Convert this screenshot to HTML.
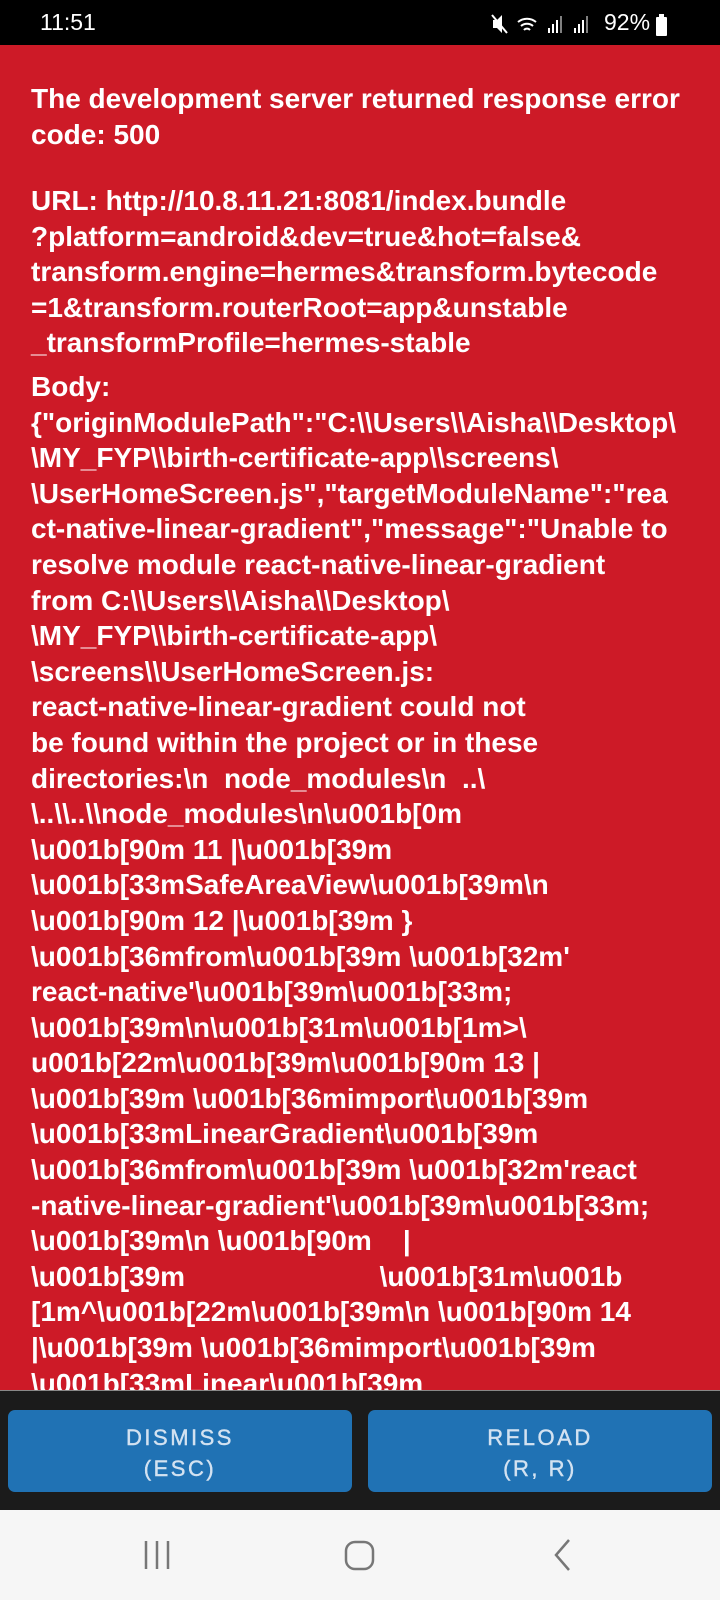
<!DOCTYPE html>
<html style="background:#f6f6f6"><head><meta charset="utf-8"><style>
*{margin:0;padding:0;box-sizing:border-box}
body{width:720px;height:1600px;position:relative;overflow:hidden;background:#f6f6f6;font-family:"Liberation Sans",sans-serif}
#sb{position:absolute;left:0;top:0;width:720px;height:45px;background:#000;color:#fff}
#red{position:absolute;left:0;top:45px;width:720px;height:1345px;background:#cd1a27;overflow:hidden}
.blk{position:absolute;left:31px;color:#fff;font-weight:bold;font-size:28px;line-height:35.6px;letter-spacing:0;white-space:pre}
#bar{position:absolute;left:0;top:1390px;width:720px;height:120px;background:#1b1b1b;border-top:1px solid #888}
.btn{position:absolute;top:19px;height:82px;width:344px;background:#2072b4;border-radius:7px;color:#d3e2f1;font-size:22px;letter-spacing:2.5px;text-align:center;line-height:31px;padding-top:12px;-webkit-text-stroke:0.4px #d3e2f1}
#nav{position:absolute;left:0;top:1510px;width:720px;height:90px;background:#f6f6f6}
</style></head><body>
<div id="sb">
<div style="position:absolute;left:40px;top:9px;font-size:23px">11:51</div>
<svg style="position:absolute;left:490px;top:12px" width="180" height="24" viewBox="0 0 180 24">
<g fill="#fff" stroke="#fff">
<path d="M3 8h4l5-5v18l-5-5H3z" stroke="none"/><path d="M2 3l15 18" stroke-width="2"/>
<path d="M28 10a14 14 0 0 1 18 0M31 14a9 9 0 0 1 12 0M34 18a4 4 0 0 1 6 0" fill="none" stroke-width="2"/>
<rect x="58" y="16" width="2" height="5" stroke="none"/><rect x="62" y="12" width="2" height="9" stroke="none"/><rect x="66" y="8" width="2" height="13" stroke="none"/><rect x="70" y="4" width="2" height="17" stroke="none" opacity=".5"/>
<rect x="84" y="16" width="2" height="5" stroke="none"/><rect x="88" y="12" width="2" height="9" stroke="none"/><rect x="92" y="8" width="2" height="13" stroke="none"/><rect x="96" y="4" width="2" height="17" stroke="none" opacity=".5"/>
</g></svg>
<div style="position:absolute;left:604px;top:9px;font-size:23px;color:#fff">92%</div>
<div style="position:absolute;left:656px;top:17px;width:11px;height:19px;background:#fff;border-radius:1px"></div>
<div style="position:absolute;left:659px;top:14px;width:5px;height:3px;background:#fff"></div>
</div>
<div id="red"></div>
<div class="blk" style="top:81px">The development server returned response error
code: 500</div>
<div class="blk" style="top:183px">URL: http://10.8.11.21:8081/index.bundle
?platform=android&amp;dev=true&amp;hot=false&amp;
transform.engine=hermes&amp;transform.bytecode
=1&amp;transform.routerRoot=app&amp;unstable
_transformProfile=hermes-stable</div>
<div class="blk" style="top:369px;height:1021px;overflow:hidden">Body:
{"originModulePath":"C:\\Users\\Aisha\\Desktop\
\MY_FYP\\birth-certificate-app\\screens\
\UserHomeScreen.js","targetModuleName":"rea
ct-native-linear-gradient","message":"Unable to
resolve module react-native-linear-gradient
from C:\\Users\\Aisha\\Desktop\
\MY_FYP\\birth-certificate-app\
\screens\\UserHomeScreen.js:
react-native-linear-gradient could not
be found within the project or in these
directories:\n  node_modules\n  ..\
\..\\..\\node_modules\n\u001b[0m
\u001b[90m 11 |\u001b[39m
\u001b[33mSafeAreaView\u001b[39m\n
\u001b[90m 12 |\u001b[39m }
\u001b[36mfrom\u001b[39m \u001b[32m'
react-native'\u001b[39m\u001b[33m;
\u001b[39m\n\u001b[31m\u001b[1m&gt;\
u001b[22m\u001b[39m\u001b[90m 13 |
\u001b[39m \u001b[36mimport\u001b[39m
\u001b[33mLinearGradient\u001b[39m
\u001b[36mfrom\u001b[39m \u001b[32m'react
-native-linear-gradient'\u001b[39m\u001b[33m;
\u001b[39m\n \u001b[90m    |
\u001b[39m                         \u001b[31m\u001b
[1m^\u001b[22m\u001b[39m\n \u001b[90m 14
|\u001b[39m \u001b[36mimport\u001b[39m
\u001b[33mLinear\u001b[39m</div>
<div id="bar">
<div class="btn" style="left:8px">DISMISS<br>(ESC)</div>
<div class="btn" style="left:368px">RELOAD<br>(R, R)</div>
</div>
<div id="nav">
<svg width="720" height="90" viewBox="0 0 720 90" style="display:block">
<g stroke="#777" stroke-width="2.5" fill="none">
<path d="M146 31v28M157 31v28M168 31v28"/>
<rect x="346" y="32" width="27" height="27" rx="9"/>
<path d="M569 30l-13 15 13 15"/>
</g></svg>
</div>
</body></html>
